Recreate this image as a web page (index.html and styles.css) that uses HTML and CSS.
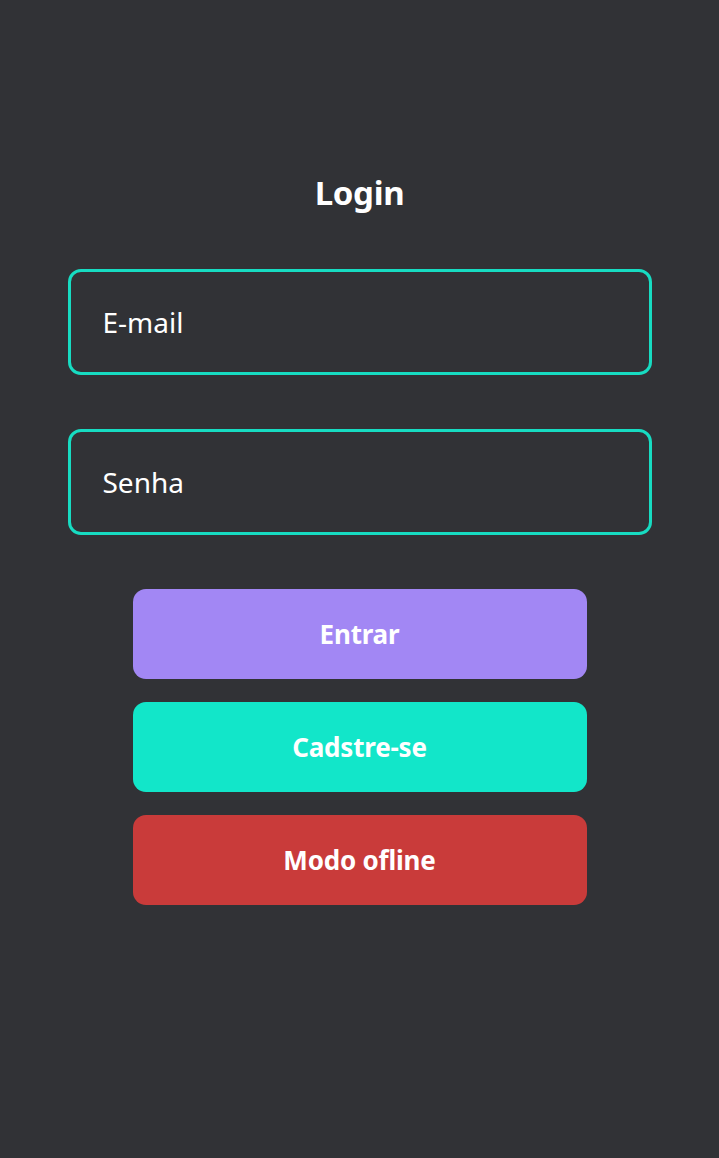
FILE: index.html
```html
<!DOCTYPE html>
<html lang="pt">
<head>
<meta charset="utf-8">
<title>Login</title>
<link rel="stylesheet" href="styles.css">
</head>
<body>
<main class="page">
  <h1 class="title">Login</h1>
  <form class="form">
    <input class="field" type="email" placeholder="E-mail">
    <input class="field" type="password" placeholder="Senha">
    <div class="actions">
      <button type="button" class="btn btn-primary">Entrar</button>
      <button type="button" class="btn btn-teal">Cadstre-se</button>
      <button type="button" class="btn btn-red">Modo ofline</button>
    </div>
  </form>
</main>
</body>
</html>
```

FILE: styles.css
```css
html, body {
  margin: 0;
  padding: 0;
  background: #313236;
  height: 100%;
}
body {
  font-family: "Noto Sans", "Open Sans", sans-serif;
  color: #ffffff;
}
.page {
  display: flex;
  flex-direction: column;
  align-items: center;
  padding-top: 172px;
}
.title {
  margin: 0;
  font-size: 33px;
  line-height: 42px;
  font-weight: 700;
  letter-spacing: -0.3px;
}
.form {
  width: 584px;
  margin-top: 55px;
  display: flex;
  flex-direction: column;
  align-items: center;
}
.field {
  box-sizing: border-box;
  width: 100%;
  height: 106px;
  margin: 0 0 54px;
  border: 3px solid #17dcc2;
  border-radius: 13px;
  background: transparent;
  padding: 0 0 0 32px;
  font-family: inherit;
  font-size: 28px;
  color: #ffffff;
  outline: none;
}
.field::placeholder {
  color: #ffffff;
  opacity: 1;
}
.actions {
  width: 454px;
  display: flex;
  flex-direction: column;
  gap: 23px;
}
.btn {
  height: 90px;
  border: 0;
  border-radius: 13px;
  font-family: inherit;
  font-size: 26px;
  font-weight: 700;
  color: #ffffff;
  letter-spacing: -0.2px;
  cursor: pointer;
}
.btn-primary { background: #a287f4; }
.btn-teal { background: #12e6c9; }
.btn-red { background: #c93b3a; }
```
